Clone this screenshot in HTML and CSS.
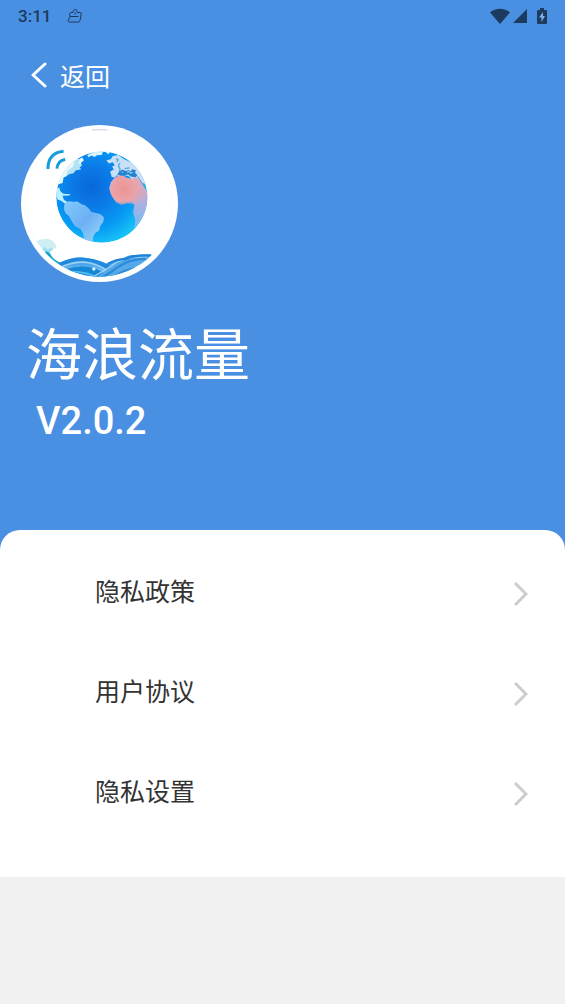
FILE: index.html
```
<!DOCTYPE html>
<html lang="zh-CN">

    <head>
        <meta charset="UTF-8">
        <meta name="viewport" content="width=device-width, initial-scale=1.0">
        <title>海浪流量</title>
        <link rel="stylesheet" href="styles.css">
    </head>

    <body>
        <header class="header">
            <div class="status">
                <span class="time">3:11</span>
                <svg class="notice" viewBox="0 0 16 16" aria-hidden="true">
                    <path d="M3.500 4.500h2.500c.2-2 .8-3 2.200-3s2 1 2 3h2.800q1.500 0 1.300 1.300L13 12.500q-.3 1.500-1.700 1.500H2.300Q.8 14 1.200 12.700l1.800-4q-1-3.800.5-4.200zM3 8.500h8.500M8.200 4.500v2"/>
                </svg>
                <div class="signals">
                    <svg class="wifi" viewBox="0 0 20 16" aria-hidden="true"><path d="M0 4.500C5.500-.5 14.500-.5 20 4.500L10 16z"/></svg>
                    <svg class="cell" viewBox="0 0 14 14" aria-hidden="true"><path d="M14 0v14H0z"/></svg>
                    <svg class="battery" viewBox="0 0 10 16" aria-hidden="true">
                        <path d="M3 0h4v2h2q1 0 1 1v12q0 1-1 1H1q-1 0-1-1V3q0-1 1-1h2z"/>
                        <path class="bolt" d="M6 4L2 9.500h2.500V14L8 8H6z"/>
                    </svg>
                </div>
            </div>
            <a class="back" href="#">
                <svg class="back-icon" viewBox="0 0 16 26" aria-hidden="true"><path d="M14 2L2 13l12 11"/></svg>
                <span>返回</span>
            </a>
            <svg class="logo" viewBox="17 16 472 472" role="img" aria-label="海浪流量">
                <defs>
                    <radialGradient id="ocean" gradientUnits="userSpaceOnUse" cx="228" cy="202" r="180">
                        <stop offset="0" stop-color="#0868d8"/>
                        <stop offset=".35" stop-color="#0b7be8"/>
                        <stop offset=".7" stop-color="#0799f4"/>
                        <stop offset="1" stop-color="#18c5f6"/>
                    </radialGradient>
                    <linearGradient id="africa" x1="0" y1="0" x2="0" y2="1">
                        <stop offset="0" stop-color="#d9b4cf"/>
                        <stop offset=".3" stop-color="#d0a9c4"/>
                        <stop offset=".55" stop-color="#a9b0e2"/>
                        <stop offset="1" stop-color="#73bdf7"/>
                    </linearGradient>
                    <radialGradient id="glow" gradientUnits="userSpaceOnUse" cx="325" cy="208" r="72">
                        <stop offset="0" stop-color="#ec9496"/>
                        <stop offset=".5" stop-color="#eba3a6"/>
                        <stop offset="1" stop-color="#d1a8c5" stop-opacity="0"/>
                    </radialGradient>
                    <linearGradient id="america" x1="0" y1="0" x2="1" y2="1">
                        <stop offset="0" stop-color="#80caff"/>
                        <stop offset=".5" stop-color="#6daff4"/>
                        <stop offset="1" stop-color="#9bdcfb"/>
                    </linearGradient>
                    <linearGradient id="wave" x1="0" y1="0" x2="0" y2="1">
                        <stop offset="0" stop-color="#1784db"/>
                        <stop offset=".5" stop-color="#67b7ef"/>
                        <stop offset="1" stop-color="#149df0"/>
                    </linearGradient>
                    <clipPath id="globe"><circle cx="260" cy="233" r="137"/></clipPath>
                    <clipPath id="face"><circle cx="253" cy="252" r="220"/></clipPath>
                </defs>
                <circle cx="253" cy="252" r="236" fill="#fff"/>
                <circle cx="253" cy="252" r="222" fill="none" stroke="#edf2f8" stroke-width="1"/>
                <path d="M230 31q23-2 46 0" fill="none" stroke="#a9b9cb" stroke-width="2"/>
                <g fill="none" stroke="#159eda" stroke-width="9">
                    <path d="M98 148c0-32 17-50 47-53"/>
                    <path d="M125 147c2-16 9-25 25-27"/>
                </g>
                <g clip-path="url(#globe)">
                    <circle cx="260" cy="233" r="137" fill="url(#ocean)"/>
                    <!-- north america and greenland -->
                    <path d="M120 206l10-12 12-4 3-16 9-4 4-10 12-6 12-3 4-8 13-3-2-10 9-8-5-8-12 6-3-8 14-5 4-12H100z" fill="#e9f8fd"/>
                    <path d="M153 170l3-15 18-14 5-19 15-3-4 13 11 3-8 8 5 6-17 4-6 8-12 2z" fill="#b2e3f4"/>
                    <path d="M216 107l18-10h29l-3 9-15 1-7 5-9-4-9 5zM269 95l18 1-8 8z" fill="#d6f3fd"/>
                    <path d="M120 208l12-4 4 12 8 7 22 1-4 4-20 1 4 12 12 8-8 4-14-10-8-2-10-20z" fill="#b9efff"/>
                    <!-- south america -->
                    <path d="M149 253l11-7 15 2 11-1 14 9 10 3 11 10 7 10 15 3 14 4 8 8-2 14-9 12-3 13-12 7-6 13-3 17-13 2-9-13-3-18-8-13-17-9-10-15-8-15-10-8-5-13z" fill="url(#america)" stroke="#8bcdf8" stroke-width="2"/>
                    <!-- europe and asia -->
                    <path d="M290 172l-5-16 11-6-5-9 8-4-6-9-12 4-7-10 13-3 6-10 17-3 16 12 35 17 28 27 20 47-23-18-13-4-9-12-13 4-10-9-14-4-11 7-11-6-5 7z" fill="#c8dff7"/>
                    <path d="M314 130l-4 9 5 10-3 8M303 117l6 4-4 6M329 147l14-2" fill="none" stroke="#4ba9e4" stroke-width="4"/>
                    <path d="M306 164l8-9 9-5 10 5 6-4 9 4 3-6 11 3-2 8 7 6-6 8-14-3-8-6-13 2-8 4-8-5z" fill="#2583ce"/>
                    <path d="M336 158l8-2 2 5 7-2M320 160l4-4" fill="none" stroke="#bedaf3" stroke-width="3"/>
                    <!-- africa -->
                    <path d="M297 176l15-8 15 2 10 6 18 2 10-6 17 18 23 47-3 48-24 38-20 2 3-24-7-22 4-22-6-10-20-4-16 6-17-7-12-18-5-18 5-18z" fill="url(#africa)"/>
                    <path d="M297 176l15-8 15 2 10 6 18 2 10-6 17 18 14 40-20 18-18 8-10-4-12-1-17 5-16-7-12-18-5-18 5-18z" fill="url(#glow)"/>
                    <path d="M368 170l9 15 14 23" fill="none" stroke="#5f9ed9" stroke-width="3"/>
                </g>
                <g clip-path="url(#face)">
                    <!-- spray on the left -->
                    <path d="M55 370q20-14 44-11 24 5 25 30l-19-8-9 14-12-8-15 5z" fill="#cfeef4"/>
                    <path d="M79 391l10-10 8 9 12-8 5 8-15 12z" fill="#9fe1ee"/>
                    <path d="M87 397q15-3 20 10 8 16 28 22l-20 20z" fill="#16a5ce"/>
                    <!-- waves -->
                    <path d="M130 432q42-22 83-16 31 3 65 18 31-12 57-23 18-8 81-5l-45 90H150z" fill="url(#wave)"/>
                    <path d="M130 432q48-24 90-15 33 5 70 24l-15 12q-31-27-66-29-38-3-68 22z" fill="#2089dd"/>
                    <path d="M141 441q47-17 78-11 33 6 54 22" fill="none" stroke="#9bd1f4" stroke-width="5"/>
                    <path d="M153 450q39-14 69-6 25 4 42 17l-22 20-72-10z" fill="#1687d5"/>
                    <path d="M225 483q39-20 66-42 50-34 125-34l-15 23q-49 6-82 28-29 19-57 34z" fill="#56a9e8"/>
                    <path d="M232 473q45-24 70-43 42-20 92-16" fill="none" stroke="#a5d3f4" stroke-width="4"/>
                    <path d="M250 480q37-19 60-38 33-23 82-24M285 483q27-26 60-33 19-4 50-4" fill="none" stroke="#2c8bdb" stroke-width="7"/>
                    <path d="M277 434q25-15 55-15 25-13 75-11" fill="none" stroke="#1d83d8" stroke-width="7"/>
                    <path d="M151 458q53-6 98 18" fill="none" stroke="#53bdf4" stroke-width="5"/>
                    <circle cx="236" cy="449" r="5" fill="#dcf7ff"/>
                </g>
            </svg>
            <h1 class="name">海浪流量</h1>
            <p class="version">V2.0.2</p>
        </header>

        <main class="panel">
            <nav class="menu">
                <a class="item" href="#">
                    <span class="label">隐私政策</span>
                    <svg class="arrow" viewBox="0 0 14 24" aria-hidden="true"><path d="M1 1l11 11L1 23"/></svg>
                </a>
                <a class="item" href="#">
                    <span class="label">用户协议</span>
                    <svg class="arrow" viewBox="0 0 14 24" aria-hidden="true"><path d="M1 1l11 11L1 23"/></svg>
                </a>
                <a class="item" href="#">
                    <span class="label">隐私设置</span>
                    <svg class="arrow" viewBox="0 0 14 24" aria-hidden="true"><path d="M1 1l11 11L1 23"/></svg>
                </a>
            </nav>
        </main>
    </body>

</html>
```
FILE: styles.css
```
* {
    margin: 0;
    padding: 0;
    box-sizing: border-box;
}

body {
    background: #f1f1f1;
    font-family: Roboto, "Noto Sans CJK SC", sans-serif;
}

a {
    color: inherit;
    text-decoration: none;
}

svg {
    display: block;
    flex: none;
}

.header {
    padding-bottom: 104px;
    background: #4a90e2;
    color: #fff;
}

.status {
    display: flex;
    align-items: center;
    height: 32px;
    padding: 0 18px;
    color: #1d3a5f;
    font-size: 17px;
    font-weight: 500;
}

.notice {
    width: 16px;
    height: 16px;
    margin-left: 16px;
    fill: none;
    stroke: #1d3a5f;
    stroke-width: 1;
}

.signals {
    display: flex;
    align-items: center;
    margin-left: auto;
    fill: #1d3a5f;
}

.wifi {
    width: 20px;
    height: 16px;
}

.cell {
    width: 14px;
    height: 14px;
    margin: 0 10px 0 3px;
}

.battery {
    width: 10px;
    height: 16px;
}

.bolt {
    fill: #7fb0e8;
}

.back {
    display: inline-flex;
    align-items: center;
    gap: 13px;
    height: 86px;
    padding-left: 31px;
    font-size: 25px;
}

.back-icon {
    width: 16px;
    height: 26px;
    fill: none;
    stroke: #fff;
    stroke-width: 3;
    stroke-linecap: round;
    stroke-linejoin: round;
}

.logo {
    width: 157px;
    height: 157px;
    margin: 7px 0 0 21px;
}

.name {
    margin: 34px 0 0 26px;
    font-size: 56px;
    font-weight: 400;
    line-height: 80px;
}

.version {
    margin-left: 36px;
    font-size: 38px;
    font-weight: 500;
    line-height: 50px;
}

.panel {
    margin-top: -20px;
    padding: 14px 0 33px;
    border-radius: 20px 20px 0 0;
    background: #fff;
}

.item {
    display: flex;
    align-items: center;
    justify-content: space-between;
    height: 100px;
    padding: 0 37px 0 95px;
    color: #333;
    font-size: 25px;
}

.label {
    padding-bottom: 8px;
}

.arrow {
    width: 14px;
    height: 24px;
    fill: none;
    stroke: #ccc;
    stroke-width: 3;
}
```
